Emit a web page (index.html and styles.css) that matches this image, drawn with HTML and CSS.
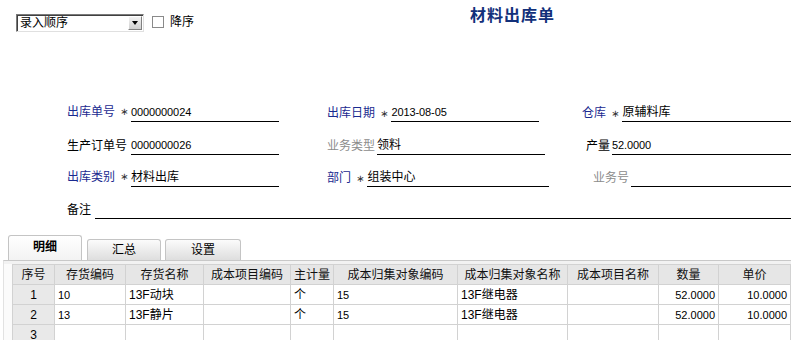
FILE: index.html
```html
<!DOCTYPE html>
<html lang="zh">
<head>
<meta charset="utf-8">
<link rel="stylesheet" href="styles.css">
</head>
<body>
<div class="topbar">
  <div class="combo">
    <span class="combo-text">录入顺序</span>
    <span class="combo-btn"><span class="tri"></span></span>
  </div>
  <span class="check"></span>
  <span class="check-label">降序</span>
  <h1 class="title">材料出库单</h1>
</div>

<div class="form">
  <div class="row r1">
    <div class="cell c1"><span class="lab lab1 blue">出库单号<span class="star">∗</span></span><span class="field"><span class="num">0000000024</span></span></div>
    <div class="cell c2 e539"><span class="lab blue">出库日期</span><span class="star">∗</span><span class="field"><span class="num">2013-08-05</span></span></div>
    <div class="cell c3"><span class="lab blue">仓库</span><span class="star">∗</span><span class="field">原辅料库</span></div>
  </div>
  <div class="row r2">
    <div class="cell c1"><span class="lab lab1">生产订单号</span><span class="field"><span class="num">0000000026</span></span></div>
    <div class="cell c2 e545"><span class="lab gray">业务类型</span><span class="field f2">领料</span></div>
    <div class="cell c3 s4"><span class="lab">产量</span><span class="field f2"><span class="num">52.0000</span></span></div>
  </div>
  <div class="row r3">
    <div class="cell c1"><span class="lab lab1 blue">出库类别<span class="star">∗</span></span><span class="field">材料出库</span></div>
    <div class="cell c2 e549"><span class="lab blue">部门</span><span class="star">∗</span><span class="field">组装中心</span></div>
    <div class="cell c3 s11"><span class="lab gray">业务号</span><span class="field f2"></span></div>
  </div>
  <div class="row r4">
    <div class="cell remark"><span class="lab">备注</span><span class="field f4"></span></div>
  </div>
</div>

<div class="tabs">
  <span class="tab active">明细</span>
  <span class="tab t2">汇总</span>
  <span class="tab t3">设置</span>
</div>

<div class="panel">
  <table class="grid">
    <colgroup>
      <col class="w1"><col class="w2"><col class="w3"><col class="w4"><col class="w5">
      <col class="w6"><col class="w7"><col class="w8"><col class="w9"><col class="w10">
    </colgroup>
    <thead>
      <tr>
        <th>序号</th><th>存货编码</th><th>存货名称</th><th>成本项目编码</th><th>主计量</th>
        <th>成本归集对象编码</th><th>成本归集对象名称</th><th>成本项目名称</th><th>数量</th><th>单价</th>
      </tr>
    </thead>
    <tbody>
      <tr>
        <td class="idx">1</td><td class="n">10</td><td>13F动块</td><td></td><td>个</td>
        <td class="n">15</td><td>13F继电器</td><td></td><td class="r n">52.0000</td><td class="r n">10.0000</td>
      </tr>
      <tr>
        <td class="idx">2</td><td class="n">13</td><td>13F静片</td><td></td><td>个</td>
        <td class="n">15</td><td>13F继电器</td><td></td><td class="r n">52.0000</td><td class="r n">10.0000</td>
      </tr>
      <tr>
        <td class="idx">3</td><td></td><td></td><td></td><td></td>
        <td></td><td></td><td></td><td></td><td></td>
      </tr>
    </tbody>
  </table>
</div>
</body>
</html>
```

FILE: styles.css
```css
html, body {
  margin: 0;
  padding: 0;
  background: #ffffff;
}
body {
  width: 791px;
  height: 340px;
  overflow: hidden;
  font-family: "Liberation Sans", "Noto Sans CJK SC", sans-serif;
  font-size: 12px;
  color: #000;
}

/* top bar */
.topbar {
  display: flex;
  align-items: flex-start;
  height: 40px;
}
.combo {
  margin: 14px 0 0 16px;
  width: 128px;
  height: 18px;
  box-sizing: border-box;
  border: 1px solid #7a7a7a;
  border-right-color: #e0e0e0;
  border-bottom-color: #e0e0e0;
  box-shadow: inset 1px 1px 0 #404040;
  display: flex;
  align-items: center;
  background: #fff;
}
.combo-text {
  flex: 1;
  padding-left: 3px;
  line-height: 14px;
  font-size: 12px;
}
.combo-btn {
  width: 14px;
  height: 14px;
  margin-right: 1px;
  box-sizing: border-box;
  background: linear-gradient(#f2f2f2, #cfcfcf);
  border: 1px solid #fff;
  border-right-color: #808080;
  border-bottom-color: #808080;
  display: flex;
  align-items: center;
  justify-content: center;
}
.tri {
  width: 0;
  height: 0;
  border-left: 3.5px solid transparent;
  border-right: 3.5px solid transparent;
  border-top: 4px solid #000;
}
.check {
  margin: 16px 0 0 8px;
  width: 12px;
  height: 12px;
  box-sizing: border-box;
  border: 1px solid #8a8a8a;
  background: #fff;
}
.check-label {
  margin: 14px 0 0 6px;
  line-height: 16px;
}
.title {
  margin: 6px 0 0 276px;
  font-size: 16px;
  line-height: 20px;
  font-weight: bold;
  color: #12307a;
  letter-spacing: 1px;
}

/* form */
.form {
  margin-top: 49px;
}
.row {
  display: grid;
  grid-template-columns: 327px 255px 209px;
  align-items: end;
}
.r1, .r2 { height: 33px; }
.r3, .r4 { height: 32px; }
.r4 { grid-template-columns: 791px; }
.cell {
  display: flex;
  align-items: flex-end;
  height: 100%;
  box-sizing: border-box;
}
.lab {
  white-space: nowrap;
  line-height: 14px;
  padding-bottom: 2px;
}
.blue { color: #1a2a90; }
.gray { color: #8c8c8c; }
.star {
  color: #333;
  font-family: "DejaVu Sans", sans-serif;
  line-height: 14px;
  padding-bottom: 1px;
  margin-left: 5px;
  font-size: 10px;
}
.field {
  flex: 1;
  border-bottom: 1px solid #000;
  line-height: 14px;
  padding-bottom: 2px;
  margin-left: 3px;
  white-space: nowrap;
  min-height: 14px;
}
.f2 { margin-left: 2px; }
.num {
  font-size: 11px;
  letter-spacing: -0.1px;
}

.c1 {
  padding-left: 67px;
  padding-right: 48px;
}
.lab1 {
  width: 64px;
  box-sizing: border-box;
  display: flex;
  justify-content: space-between;
}
.lab1 .star { margin-right: 3px; }
.c1 .field { margin-left: 0; }
.c2 { padding-left: 0; }
.e539 { padding-right: 43px; }
.e545 { padding-right: 37px; }
.e549 { padding-right: 33px; }
.s4 { padding-left: 4px; }
.s11 { padding-left: 11px; }
.remark { padding-left: 67px; }
.f4 { margin-left: 4px; }

/* tabs */
.tabs {
  display: flex;
  align-items: flex-end;
  margin-top: 16px;
  height: 25px;
  padding-left: 8px;
}
.tab {
  box-sizing: border-box;
  height: 21px;
  width: 74px;
  border: 1px solid #c4c4c4;
  border-bottom: none;
  border-radius: 3px 3px 0 0;
  background: linear-gradient(#fbfbfb, #dedede);
  text-align: center;
  line-height: 20px;
  margin-right: 5px;
}
.tab.active {
  height: 25px;
  font-weight: bold;
  background: linear-gradient(#ffffff, #f3f3f3);
  line-height: 22px;
}
.t3 { width: 76px; margin-left: -1px; }

/* panel + grid */
.panel {
  border-top: 1px solid #c8c8c8;
  margin-left: 3px;
  border-left: 1px solid #e2e2e2;
  padding: 3px 0 0 8px;
  background: linear-gradient(#f2f2f2 0, #f2f2f2 3px, #fbfbfb 3px);
}
.grid {
  border-collapse: collapse;
  table-layout: fixed;
  width: 778px;
  background: #fff;
}
.w1 { width: 42px; }
.w2 { width: 71px; }
.w3 { width: 78px; }
.w4 { width: 87px; }
.w5 { width: 43px; }
.w6 { width: 124px; }
.w7 { width: 110px; }
.w8 { width: 91px; }
.w9 { width: 60px; }
.w10 { width: 72px; }
.grid th, .grid td {
  height: 19px;
  padding: 0 3px;
  border: 1px solid #d2d2d2;
  white-space: nowrap;
  overflow: hidden;
  font-size: 12px;
  line-height: 18px;
}
.grid th {
  background: #e6e6e6;
  font-weight: normal;
  text-align: center;
  color: #111;
}
.grid td.idx {
  background: #e9e9e9;
  text-align: center;
}
.grid td.r { text-align: right; }
.grid td.n { font-size: 11px; }
```
